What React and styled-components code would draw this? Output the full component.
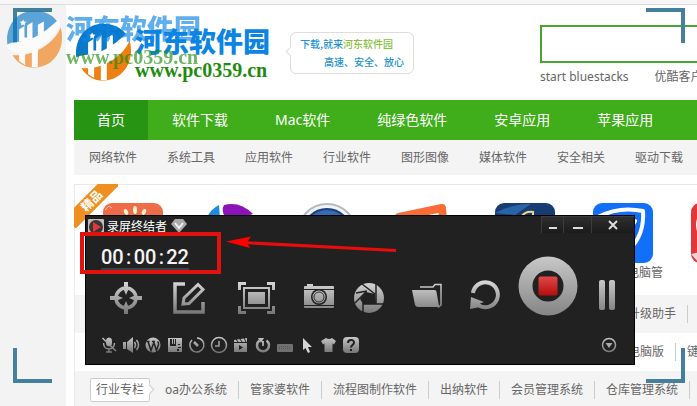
import React from "react";
import styled, { createGlobalStyle } from "styled-components";

const GlobalStyle = createGlobalStyle`
  * {
    box-sizing: border-box;
  }
  body {
    margin: 0;
    background: #f3f3f3;
    overflow: hidden;
    color: #666;
    font: 12px/18px "Noto Sans", "Noto Sans CJK SC", sans-serif;
  }
  a {
    color: inherit;
    text-decoration: none;
    white-space: nowrap;
  }
  button {
    display: flex;
    align-items: center;
    justify-content: center;
    padding: 0;
    border: 0;
    background: none;
    cursor: pointer;
  }
  svg {
    display: block;
    flex: none;
    overflow: visible;
  }
`;

const Screen = styled.div`
  position: relative;
  min-height: 100vh;
  overflow: hidden;
`;
const TopStrip = styled.div`
  height: 5px;
  background: #f7f7f7;
  border-bottom: 1px solid #ddd;
`;
const Page = styled.main`
  margin-left: 66px;
  padding-left: 8px;
  background: #fff;
  min-height: calc(100vh - 5px);
`;
const Header = styled.header`
  display: flex;
  align-items: flex-start;
  height: 95px;
  padding-top: 18px;
`;
const Brand = styled.div`
  display: flex;
  flex: none;
  gap: 4px;
  width: 196px;
`;
const BrandText = styled.div`
  display: flex;
  flex-direction: column;
  padding-top: 3px;
`;
const BrandName = styled.strong`
  color: #0c84e4;
  font: 900 27px/30px "Noto Sans CJK SC", sans-serif;
  white-space: nowrap;
`;
const BrandUrl = styled.span`
  color: #1f8c10;
  font: bold 20px/28px "Liberation Serif", serif;
`;
const Watermark = styled.div`
  position: absolute;
  left: 5px;
  top: 10px;
  opacity: 0.65;
`;
const Bubble = styled.p`
  position: relative;
  flex: none;
  width: 124px;
  margin: 9px 0 0 20px;
  padding: 2px 9px;
  border: 1px solid #ddd;
  border-radius: 6px;
  color: #1b93cf;
  font: 500 10px/18px "Noto Sans CJK SC", sans-serif;
  white-space: nowrap;
  &::before {
    content: "";
    position: absolute;
    left: -4px;
    top: 15px;
    width: 6px;
    height: 6px;
    background: #fff;
    border: 1px solid #ddd;
    border-width: 0 0 1px 1px;
    transform: rotate(45deg);
  }
`;
const BubbleLine = styled.span`
  display: block;
  text-align: ${(p) => p.$align || "left"};
`;
const Green = styled.span`
  color: #86bf3c;
`;
const Search = styled.div`
  flex: none;
  width: 300px;
  margin: 2px 0 0 126px;
`;
const SearchInput = styled.input`
  display: block;
  width: 100%;
  height: 38px;
  padding: 0 8px;
  border: 2px solid #49a52f;
  background: #fff;
  outline: none;
`;
const HotLinks = styled.div`
  display: flex;
  gap: 26px;
  padding-top: 5px;
`;
const Nav = styled.nav`
  display: flex;
  gap: 1px;
  background: #3fae1a;
`;
const NavLink = styled.a`
  padding: 0 23px;
  color: #fff;
  background: ${(p) => (p.$active ? "#289413" : "none")};
  font-size: 14px;
  line-height: 40px;
`;
const SubNav = styled.nav`
  display: flex;
  background: #f4f4f4;
`;
const SubLink = styled.a`
  padding: 0 15px;
  line-height: 35px;
`;
const Card = styled.section`
  position: relative;
  margin-top: 9px;
  border: 1px solid #e9e9e9;
  border-width: 1px 0 0 1px;
`;
const Ribbon = styled.div`
  position: absolute;
  left: -1px;
  top: -1px;
  width: 44px;
  height: 44px;
  overflow: hidden;
  span {
    position: absolute;
    left: -13px;
    top: 9px;
    width: 62px;
    background: #ef8f22;
    color: #fff;
    font-weight: bold;
    line-height: 16px;
    text-align: center;
    transform: rotate(-45deg);
  }
`;
const Apps = styled.div`
  display: flex;
  height: 110px;
  padding: 18px 0 0 9px;
`;
const AppLink = styled.a`
  display: flex;
  flex: none;
  flex-direction: column;
  gap: 1px;
  width: 98px;
  padding: 0 9px 0 19px;
  text-align: right;
`;
const LinkRow = styled.div`
  display: flex;
  align-items: center;
  height: 38px;
  padding-left: ${(p) => p.$indent}px;
  background: ${(p) => (p.$shade ? "#f4f4f4" : "#fff")};
`;
const RowLink = styled.a`
  padding: 0 11px;
  border-right: 1px solid #ccc;
`;
const RowLabel = styled.strong`
  position: relative;
  flex: none;
  margin-right: 4px;
  padding: 1px 5px;
  border: 1px solid #ccc;
  border-radius: 2px;
  background: #fff;
  font-weight: normal;
  line-height: 20px;
  &::after {
    content: "";
    position: absolute;
    right: -4px;
    top: 7px;
    width: 6px;
    height: 6px;
    background: #fff;
    border: 1px solid #ccc;
    border-width: 1px 1px 0 0;
    transform: rotate(45deg);
  }
`;

const Recorder = styled.section`
  position: absolute;
  left: 85px;
  top: 215px;
  width: 550px;
  border: 1px solid #000;
  background: #212121;
`;
const TitleBar = styled.div`
  display: flex;
  align-items: flex-start;
  height: 18px;
  padding-left: 2px;
`;
const Title = styled.h1`
  margin: 1px 4px 0 3px;
  color: #fff;
  font-size: 12px;
  font-weight: normal;
  line-height: 20px;
`;
const TitleIcon = styled.span`
  padding-top: 3px;
`;
const WindowButtons = styled.div`
  display: flex;
  margin-left: auto;
`;
const WindowButton = styled.button`
  width: ${(p) => p.$width}px;
  height: 17px;
  border: 1px solid #3c3c3c;
  border-width: 1px 0 0 1px;
  background: linear-gradient(#2e2e2e, #1b1b1b);
`;
const Body = styled.div`
  display: grid;
  grid-template-columns: 423px 1fr;
`;
const Timer = styled.time`
  display: flex;
  width: 88px;
  margin: 12px 0 11px 15px;
  border-bottom: 3px solid #39404a;
  color: #f4f4f4;
  font: 500 20px/22px Roboto, "Liberation Sans", sans-serif;
`;
const Colon = styled.span`
  width: 11px;
  text-align: center;
`;
const Tools = styled.div`
  display: grid;
  grid-template-columns: 64px 62px 73px 52px 48px 68px 48px;
  padding-left: 8px;
`;
const Capture = styled.div`
  display: flex;
  align-items: flex-start;
  padding: 22px 0 0 9px;
`;
const PauseButton = styled.button`
  margin: 24px 0 0 21px;
`;
const SmallTools = styled.div`
  display: flex;
  padding: 20px 17px 11px 12px;
`;
const SmallTool = styled.button`
  width: 22px;
  height: 17px;
`;
const MoreButton = styled.button`
  margin-left: auto;
`;

const Highlight = styled.div`
  position: absolute;
  left: 80px;
  top: 232px;
  width: 141px;
  height: 42px;
  border: 4px solid #df120e;
`;
const Arrow = styled.svg`
  position: absolute;
  left: 224px;
  top: 230px;
`;
const Frame = styled.div`
  position: fixed;
  inset: 8px 12px 23px 13px;
  pointer-events: none;
`;
const Corner = styled.span`
  position: absolute;
  ${(p) => p.$v}: 0;
  ${(p) => p.$h}: 0;
  width: 39px;
  height: 35px;
  border: 0 solid #44809c;
  border-${(p) => p.$v}-width: 4px;
  border-${(p) => p.$h}-width: 4px;
`;

const LogoMark = () => (
  <svg width="57" height="57" viewBox="0 0 170 170">
    <path fill="#0b79c9" d="M8 108C-2 58 28 4 84 2c32-1 58 12 72 32-24 24-46 42-74 54-30 12-56 10-74 20z" />
    <path fill="#f07f13" d="M22 134c26 4 54-2 80-16 30-16 52-38 64-66 14 50-8 100-54 116-34 10-70 0-90-34z" />
    <path fill="#fff" d="M4 106c8-14 44-8 78-22 32-14 58-38 78-56l5 14c-14 34-38 58-72 74-34 16-76 18-89-10z" />
    <path fill="#fff" d="M42 58l16-10v44H42zM66 46l16-10v52H66zM98 44l18-10v50H98zM42 82h30v12H42zM98 66h28v14h-28z" />
    <path fill="#fff" d="M42 120h18v44l-18-12zM80 114h18v56H80z" />
    <path fill="#fff" d="M54 28l3 6 7 1-5 5 1 7-6-4-6 4 1-7-5-5 7-1z" />
  </svg>
);

const BrandBlock = () => (
  <Brand>
    <LogoMark />
    <BrandText>
      <BrandName>河东软件园</BrandName>
      <BrandUrl>www.pc0359.cn</BrandUrl>
    </BrandText>
  </Brand>
);

const M = "url(#metal)";
const S = "url(#metalSmall)";

const MetalDefs = () => (
  <svg width="0" height="0" style={{ position: "absolute" }}>
    <defs>
      <linearGradient id="metal" gradientUnits="userSpaceOnUse" x1="0" y1="0" x2="0" y2="32">
        <stop offset="0" stopColor="#d6d6d6" />
        <stop offset="1" stopColor="#757575" />
      </linearGradient>
      <linearGradient id="metalSmall" gradientUnits="userSpaceOnUse" x1="0" y1="0" x2="0" y2="16">
        <stop offset="0" stopColor="#c8c8c8" />
        <stop offset="1" stopColor="#747474" />
      </linearGradient>
      <linearGradient id="ring" x1="0" y1="0" x2="0" y2="1">
        <stop offset="0" stopColor="#c8c8c8" />
        <stop offset="1" stopColor="#858585" />
      </linearGradient>
      <linearGradient id="stop" x1="0" y1="0" x2="0" y2="1">
        <stop offset="0" stopColor="#e04848" />
        <stop offset="1" stopColor="#b50d0d" />
      </linearGradient>
    </defs>
  </svg>
);

const tools = [
  {
    name: "定位",
    width: 32,
    art: (
      <g fill="none" stroke={M}>
        <circle cx="16" cy="16" r="10" strokeWidth="3.500" />
        <path strokeWidth="4" d="M16 0v6M16 26v6M0 16h6M26 16h6" />
        <path fill={M} stroke="none" d="M13 6h6l-3 7zM13 26h6l-3-7zM6 13v6l7-3zM26 13v6l-7-3z" />
      </g>
    ),
  },
  {
    name: "编辑",
    width: 32,
    art: (
      <g fill="none" stroke={M}>
        <path strokeWidth="3.500" d="M12 2H2v28h28V20" />
        <path strokeWidth="3" d="M10 22l1-6L25 2.500l5 5L16 21.500z" />
      </g>
    ),
  },
  {
    name: "区域",
    width: 37,
    art: (
      <g fill="none" stroke={M}>
        <path strokeWidth="3" d="M1.500 8V1.500H8M29 1.500h6.500V8M35.500 24v6.500H29M8 30.500H1.500V24" />
        <path strokeWidth="2" d="M6 6h25v20H6z" />
        <path fill={M} stroke="none" d="M10 10h17v12H10z" />
      </g>
    ),
  },
  {
    name: "截图",
    width: 30,
    art: (
      <g>
        <path fill={M} d="M0 5q0-1 1-1h2V2h6v2h20q1 0 1 1v2H0zM0 8h30v15H0zM0 24h30v1q0 1-1 1H1q-1 0-1-1z" />
        <circle cx="15" cy="15" r="8" fill="#212121" />
        <circle cx="15" cy="15" r="6.500" fill={M} />
        <circle cx="15" cy="15" r="5" fill="none" stroke="#333" />
      </g>
    ),
  },
  {
    name: "快门",
    width: 30,
    art: (
      <g>
        <circle cx="15" cy="16" r="15" fill={M} />
        <path fill="#212121" d="M12 10l9 2 1 10-13 0-3-5z" />
        <path fill="none" stroke="#212121" strokeWidth="1.500" d="M8 2l13 10M22 2v20M30 22H9M9 31V21M1 21l11-11M2 11l11-2" />
      </g>
    ),
  },
  {
    name: "文件夹",
    width: 30,
    art: (
      <g>
        <path fill="none" stroke={M} strokeWidth="1.500" d="M8 5h13l2-2.500h6V23l-3 2.500" />
        <path fill={M} d="M0 8h22.500q2 0 2 2L27 24q0 1-1 1H6q-2 0-3-2z" />
      </g>
    ),
  },
  {
    name: "撤销",
    width: 30,
    art: (
      <g>
        <path fill="none" stroke={M} strokeWidth="4" d="M3 11A12.500 12.500 0 1 1 9 23.500" />
        <path fill={M} d="M1 15l13 5-4 1.500 3 3-13 2.500z" />
      </g>
    ),
  },
];

const smallTools = [
  {
    name: "麦克风",
    art: (
      <g fill="none" stroke={S}>
        <rect x="5.500" y="1" width="5" height="8" rx="2.500" fill={S} />
        <path strokeWidth="1.500" d="M2.500 6c0 8 11 8 11 0M8 12v3M5 15h6M1.500 1L15 14" />
      </g>
    ),
  },
  {
    name: "声音",
    art: (
      <g>
        <path fill={S} d="M0 5h3v7H0zM4 5l6-5v16l-6-4z" />
        <path fill="none" stroke={S} strokeWidth="1.500" d="M11.500 5q2 3 0 6M13.500 3q4 5 0 10" />
      </g>
    ),
  },
  {
    name: "博客",
    art: (
      <g>
        <circle cx="8" cy="8" r="7.500" fill={S} />
        <path fill="none" stroke="#212121" strokeWidth="1.500" d="M1.500 4.500h3M3 4.500l3 9 2.500-7M7 4.500h3M8.500 4.500l3 9 2-6q.5-2-1-3" />
      </g>
    ),
  },
  {
    name: "保存",
    art: (
      <g>
        <path fill={S} d="M1 1h14v14H1z" />
        <path fill="#212121" d="M3 2h2v5h1V2h1v5h1V2h1v7H3zM11 7h2v1h-2zM11 10h3v1h-3zM10 12h2v2h-2z" />
      </g>
    ),
  },
  {
    name: "延时",
    art: (
      <g fill="none" stroke={S}>
        <path strokeWidth="1.500" d="M8 1A7 7 0 1 1 3 3" />
        <path strokeWidth="2.500" d="M5 5l4 4" />
      </g>
    ),
  },
  {
    name: "时钟",
    art: (
      <g fill="none" stroke={S}>
        <circle cx="8" cy="8" r="7.500" strokeWidth="1.500" />
        <path strokeWidth="1.500" d="M8 4v5H4" />
      </g>
    ),
  },
  {
    name: "场记板",
    art: (
      <g>
        <path fill={S} d="M1 3l13-2v4H1zM1 6h13v9H1z" />
        <path stroke="#212121" d="M3 2l2 3M7 2l2 3M11 1l2 4M1 5.500h13" />
        <path fill="#212121" d="M6 8l4 2.500L6 13z" />
      </g>
    ),
  },
  {
    name: "循环",
    art: (
      <g>
        <path fill="none" stroke={S} strokeWidth="2.500" d="M4.500 3.500a6 6 0 1 0 7 0" />
        <path fill={S} d="M7 4h2v5H7zM3 1h6L6 6z" />
      </g>
    ),
  },
  {
    name: "键盘",
    art: (
      <g>
        <rect y="7" width="16" height="8" rx="1" fill="#707070" />
        <path stroke="#555" strokeDasharray="1 1" d="M2 9.500h12M2 11.500h12" />
      </g>
    ),
  },
  {
    name: "光标",
    art: <path fill="#d5d5d5" d="M4 1l9 9H9l2 5-2 1-2.500-5L4 13z" />,
  },
  {
    name: "皮肤",
    art: <path fill={S} d="M5 1q3 2 6 0l4 3-2 3.500-1.500-1V15h-8V6.500L2 7.500 0 4z" />,
  },
  {
    name: "帮助",
    art: (
      <g>
        <rect width="16" height="16" rx="4" fill={S} />
        <path fill="none" stroke="#212121" strokeWidth="2" d="M5 6c0-4 6-4 6-.500C11 8 8 8 8 10.500M8 12v2" />
      </g>
    ),
  },
];

const appArt = [
  {
    art: (
      <g>
        <rect width="60" height="60" rx="9" fill="#ee6d48" />
        <g fill="#fff3d0">
          <ellipse cx="32" cy="7" rx="2" ry="4" />
          <ellipse cx="23" cy="9" rx="2" ry="3" transform="rotate(-25 23 9)" />
          <ellipse cx="41" cy="9" rx="2" ry="3" transform="rotate(25 41 9)" />
        </g>
        <path fill="none" stroke="#f9b9a2" d="M2 7l4-4 3 2" />
      </g>
    ),
  },
  {
    art: (
      <g>
        <path fill="#1b8ce0" d="M6 14Q10 6 18 2l1 14z" />
        <path fill="#8b13b8" d="M23 2q16-4 29 9l-9 3H24q-4-7-1-12z" />
      </g>
    ),
  },
  {
    art: (
      <g>
        <circle cx="28" cy="30" r="29" fill="#f1f3f6" stroke="#b5bac2" strokeWidth="2" />
        <circle cx="28" cy="30" r="24" fill="#376bb5" stroke="#1c3f7d" strokeWidth="2" />
      </g>
    ),
  },
  {
    art: <path fill="none" stroke="#fa6b35" strokeWidth="8" strokeLinejoin="round" d="M2 40V14L45 5l3 36" />,
  },
  {
    art: (
      <g>
        <rect width="60" height="60" rx="9" fill="#173c73" />
        <path fill="#2865a5" d="M0 10Q20 0 36 1L20 12z" />
        <path fill="none" stroke="#f3d979" strokeWidth="2" d="M26 14q4-6 12-5v6" />
      </g>
    ),
  },
  {
    name: "电脑管",
    art: (
      <g>
        <rect width="60" height="60" rx="9" fill="#1270f8" />
        <path fill="none" stroke="#fff" strokeWidth="4" strokeLinejoin="round" d="M5 14Q26 3 50 8q2 28-20 44Q10 40 7 18q22-4 35 0L30 38" />
      </g>
    ),
  },
  {
    art: (
      <g>
        <rect width="60" height="60" rx="9" fill="#e3363a" />
        <circle cx="25" cy="22" r="20" fill="#fff" />
        <path fill="#ddd" d="M0 51l14-3v12H8z" />
      </g>
    ),
  },
];

const navItems = ["首页", "软件下载", "Mac软件", "纯绿色软件", "安卓应用", "苹果应用"];
const subItems = ["网络软件", "系统工具", "应用软件", "行业软件", "图形图像", "媒体软件", "安全相关", "驱动下载"];
const industry = ["oa办公系统", "管家婆软件", "流程图制作软件", "出纳软件", "会员管理系统", "仓库管理系统"];

function SitePage() {
  return (
    <Page>
      <Header>
        <BrandBlock />
        <Bubble>
          <BubbleLine>
            下载,就来<Green>河东软件园</Green>
          </BubbleLine>
          <BubbleLine $align="right">高速、安全、放心</BubbleLine>
        </Bubble>
        <Search>
          <SearchInput type="search" aria-label="搜索" />
          <HotLinks>
            <a href="#hot">start bluestacks</a>
            <a href="#hot">优酷客户</a>
          </HotLinks>
        </Search>
      </Header>
      <Nav>
        {navItems.map((item, i) => (
          <NavLink key={item} href="#nav" $active={i === 0}>
            {item}
          </NavLink>
        ))}
      </Nav>
      <SubNav>
        {subItems.map((item) => (
          <SubLink key={item} href="#sub">
            {item}
          </SubLink>
        ))}
      </SubNav>
      <Card>
        <Apps>
          {appArt.map((app, i) => (
            <AppLink key={i} href="#app">
              <svg width="60" height="60" viewBox="0 0 60 60">
                {app.art}
              </svg>
              {app.name}
            </AppLink>
          ))}
        </Apps>
        <LinkRow $shade $indent={542}>
          <RowLink href="#row">升级助手</RowLink>
        </LinkRow>
        <LinkRow $indent={542}>
          <RowLink href="#row">电脑版</RowLink>
          <RowLink href="#row">键</RowLink>
        </LinkRow>
        <LinkRow $shade $indent={15}>
          <RowLabel>行业专栏</RowLabel>
          {industry.map((item) => (
            <RowLink key={item} href="#row">
              {item}
            </RowLink>
          ))}
        </LinkRow>
        <Ribbon>
          <span>精品</span>
        </Ribbon>
      </Card>
    </Page>
  );
}

function RecorderWindow() {
  return (
    <Recorder>
      <TitleBar>
        <TitleIcon>
          <svg width="16" height="16" viewBox="0 0 16 16">
            <rect width="16" height="16" rx="1" fill="#c9b9b5" />
            <circle cx="8" cy="8" r="7" fill="#363636" />
            <path fill="#e0393a" d="M5 3l8 5-8 5z" />
          </svg>
        </TitleIcon>
        <Title>录屏终结者</Title>
        <TitleIcon>
          <svg width="16" height="14" viewBox="0 0 16 14">
            <path fill="#aaa" d="M4 0h8l4 5-8 9-8-9z" />
            <path fill="none" stroke="#f2f2f2" strokeWidth="2" d="M4 4l4 5 4-5" />
          </svg>
        </TitleIcon>
        <WindowButtons>
          <WindowButton $width={22} aria-label="隐藏">
            <svg width="8" height="8">
              <path fill="#ddd" d="M0 6h8v2H0z" />
            </svg>
          </WindowButton>
          <WindowButton $width={28} aria-label="最小化">
            <svg width="10" height="8">
              <path fill="#ddd" d="M0 6h10v2H0z" />
            </svg>
          </WindowButton>
          <WindowButton $width={43} aria-label="关闭">
            <svg width="10" height="8">
              <path stroke="#ddd" strokeWidth="2" d="M1 0l8 8M9 0L1 8" />
            </svg>
          </WindowButton>
        </WindowButtons>
      </TitleBar>
      <Body>
        <div>
          <Timer>
            00<Colon>:</Colon>00<Colon>:</Colon>22
          </Timer>
          <Tools>
            {tools.map((t) => (
              <button key={t.name} aria-label={t.name}>
                <svg width={t.width} height="32" viewBox={`0 0 ${t.width} 32`}>
                  {t.art}
                </svg>
              </button>
            ))}
          </Tools>
        </div>
        <Capture>
          <button aria-label="停止">
            <svg width="60" height="60" viewBox="0 0 60 60">
              <circle cx="30" cy="30" r="29.500" fill="url(#ring)" />
              <circle cx="30" cy="30" r="15.500" fill="#212121" />
              <rect x="20.500" y="20.500" width="19" height="19" rx="2" fill="url(#stop)" />
            </svg>
          </button>
          <PauseButton aria-label="暂停">
            <svg width="16" height="30" viewBox="0 0 16 30">
              <rect width="6" height="30" rx="2" fill="url(#ring)" />
              <rect x="10" width="6" height="30" rx="2" fill="url(#ring)" />
            </svg>
          </PauseButton>
        </Capture>
      </Body>
      <SmallTools>
        {smallTools.map((t) => (
          <SmallTool key={t.name} aria-label={t.name}>
            <svg width="16" height="16" viewBox="0 0 16 16">
              {t.art}
            </svg>
          </SmallTool>
        ))}
        <MoreButton aria-label="展开">
          <svg width="16" height="16" viewBox="0 0 16 16">
            <circle cx="8" cy="8" r="6.500" fill="none" stroke={S} strokeWidth="1.500" />
            <path fill="#aaa" d="M4.500 6h7L8 11z" />
          </svg>
        </MoreButton>
      </SmallTools>
    </Recorder>
  );
}

export default function App() {
  return (
    <Screen>
      <GlobalStyle />
      <MetalDefs />
      <TopStrip />
      <SitePage />
      <RecorderWindow />
      <Highlight />
      <Arrow width="176" height="26" viewBox="0 0 176 26">
        <path stroke="#e80c0c" strokeWidth="3" d="M18 12.500L172 20.500" />
        <path fill="#f00" d="M2 11.500L27 6.500l-4 6 3 5.500z" />
      </Arrow>
      <Frame>
        <Corner $v="top" $h="left" />
        <Corner $v="top" $h="right" />
        <Corner $v="bottom" $h="left" />
        <Corner $v="bottom" $h="right" />
      </Frame>
      <Watermark>
        <BrandBlock />
      </Watermark>
    </Screen>
  );
}
